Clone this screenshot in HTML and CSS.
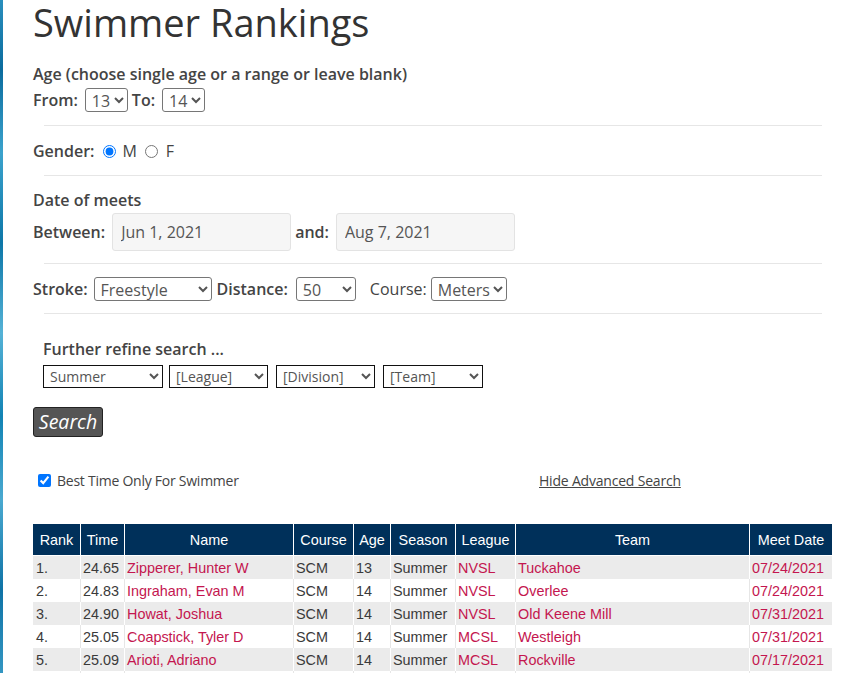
FILE: index.html
```html
<!DOCTYPE html>
<html lang="en">
<head>
<meta charset="utf-8">
<title>Swimmer Rankings</title>
<link rel="stylesheet" href="styles.css">
</head>
<body>
<div class="page">
  <h1 class="title">Swimmer Rankings</h1>

  <section class="block age">
    <div class="label">Age (choose single age or a range or leave blank)</div>
    <div class="row age-row">
      <span class="label">From:</span>
      <select class="sel sel-age"><option>13</option></select>
      <span class="label to">To:</span>
      <select class="sel sel-age sel-to"><option>14</option></select>
    </div>
  </section>

  <hr class="sep">

  <section class="block row gender">
    <span class="label">Gender:</span>
    <input type="radio" name="g" class="radio" checked><span class="opt">M</span>
    <input type="radio" name="g" class="radio radio-f"><span class="opt">F</span>
  </section>

  <hr class="sep">

  <section class="block date-block">
    <div class="label">Date of meets</div>
    <div class="row dates">
      <span class="label">Between:</span>
      <input type="text" class="date" value="Jun 1, 2021" readonly>
      <span class="label and">and:</span>
      <input type="text" class="date" value="Aug 7, 2021" readonly>
    </div>
  </section>

  <hr class="sep">

  <section class="block row stroke">
    <span class="label">Stroke:</span>
    <select class="sel sel-stroke"><option>Freestyle</option></select>
    <span class="label dist">Distance:</span>
    <select class="sel sel-dist"><option>50</option></select>
    <span class="plain course">Course:</span>
    <select class="sel sel-course"><option>Meters</option></select>
  </section>

  <hr class="sep">

  <section class="refine">
    <div class="label">Further refine search ...</div>
    <div class="refine-row">
      <select class="rsel w120"><option>Summer</option></select>
      <select class="rsel w99"><option>[League]</option></select>
      <select class="rsel w99 gap2"><option>[Division]</option></select>
      <select class="rsel w100 gap2"><option>[Team]</option></select>
    </div>
  </section>

  <button class="search">Search</button>

  <div class="options">
    <label class="best"><input type="checkbox" class="check" checked>Best Time Only For Swimmer</label>
    <a class="hide" href="#">Hide Advanced Search</a>
  </div>

  <table class="results">
    <colgroup>
      <col style="width:47px"><col style="width:44px"><col style="width:169px">
      <col style="width:60px"><col style="width:37px"><col style="width:65px">
      <col style="width:60px"><col style="width:234px"><col style="width:83px">
    </colgroup>
    <thead>
      <tr><th>Rank</th><th>Time</th><th>Name</th><th>Course</th><th>Age</th><th>Season</th><th>League</th><th>Team</th><th>Meet Date</th></tr>
    </thead>
    <tbody>
      <tr><td>1.</td><td>24.65</td><td><a href="#">Zipperer, Hunter W</a></td><td>SCM</td><td>13</td><td>Summer</td><td><a href="#">NVSL</a></td><td><a href="#">Tuckahoe</a></td><td><a href="#">07/24/2021</a></td></tr>
      <tr><td>2.</td><td>24.83</td><td><a href="#">Ingraham, Evan M</a></td><td>SCM</td><td>14</td><td>Summer</td><td><a href="#">NVSL</a></td><td><a href="#">Overlee</a></td><td><a href="#">07/24/2021</a></td></tr>
      <tr><td>3.</td><td>24.90</td><td><a href="#">Howat, Joshua</a></td><td>SCM</td><td>14</td><td>Summer</td><td><a href="#">NVSL</a></td><td><a href="#">Old Keene Mill</a></td><td><a href="#">07/31/2021</a></td></tr>
      <tr><td>4.</td><td>25.05</td><td><a href="#">Coapstick, Tyler D</a></td><td>SCM</td><td>14</td><td>Summer</td><td><a href="#">MCSL</a></td><td><a href="#">Westleigh</a></td><td><a href="#">07/31/2021</a></td></tr>
      <tr><td>5.</td><td>25.09</td><td><a href="#">Arioti, Adriano</a></td><td>SCM</td><td>14</td><td>Summer</td><td><a href="#">MCSL</a></td><td><a href="#">Rockville</a></td><td><a href="#">07/17/2021</a></td></tr>
      <tr><td>6.</td><td>25.12</td><td><a href="#">Smith, John</a></td><td>SCM</td><td>14</td><td>Summer</td><td><a href="#">NVSL</a></td><td><a href="#">Overlee</a></td><td><a href="#">07/24/2021</a></td></tr>
    </tbody>
  </table>
</div>
</body>
</html>
```

FILE: styles.css
```css
html, body {
  margin: 0;
  padding: 0;
}
body {
  background: linear-gradient(180deg, #2a8fbd 0%, #0b6c9e 10%, #3ba2cc 22%, #0d77a8 35%, #55b2d6 48%, #1283b4 60%, #4aa9d0 72%, #0f73a6 85%, #3d9fc9 100%);
  min-height: 673px;
  font-family: "Open Sans", "DejaVu Sans", sans-serif;
  color: #444;
  overflow: hidden;
}
.page {
  margin-left: 3px;
  background: #fff;
  min-height: 673px;
  padding: 0 14px 0 30px;
}
.title {
  margin: 0;
  font-size: 38px;
  font-weight: 400;
  line-height: 44px;
  color: #333;
}
.label {
  font-size: 16px;
  font-weight: 600;
  color: #444;
}
.plain {
  font-size: 16px;
  font-weight: 400;
  color: #444;
}
.block > .label,
.refine > .label {
  line-height: 22px;
}
.row {
  display: flex;
  align-items: center;
}
.sep {
  border: 0;
  border-top: 1px solid #e6e6e6;
  margin: 0 10px 0 11px;
  height: 0;
}
.sel {
  font-family: "Open Sans", "DejaVu Sans", sans-serif;
  font-size: 16px;
  color: #555;
  height: 24px;
  border: 1px solid #767676;
  border-radius: 3px;
  background: #fff;
  padding: 0 0 0 2px;
}

/* Age */
.age {
  margin: 19px 0 13px;
}
.age-row {
  margin-top: 3px;
}
.sel-age {
  width: 43px;
  margin-left: 7px;
}
.to {
  margin-left: 4px;
}
.sel-to {
  margin-left: 7px;
}

/* Gender */
.gender {
  margin: 14px 0 13px;
  height: 22px;
}
.radio {
  margin: 0 6px 0 9px;
  width: 13px;
  height: 13px;
}
.radio-f {
  margin-left: 8px;
  margin-right: 8px;
}
.opt {
  font-size: 16px;
  color: #444;
}

/* Dates */
.date-block {
  margin: 13px 0 12px;
}
.dates {
  margin-top: 2px;
}
.date {
  width: 179px;
  height: 38px;
  box-sizing: border-box;
  border: 1px solid #e3e3e3;
  border-radius: 3px;
  background: #f6f6f6;
  font-family: "Open Sans", "DejaVu Sans", sans-serif;
  font-size: 16px;
  color: #555;
  padding: 0 8px;
  margin-left: 7px;
}
.and {
  margin-left: 4px;
}

/* Stroke */
.stroke {
  margin: 13px 0 12px;
}
.sel-stroke {
  width: 118px;
  margin-left: 6px;
}
.dist {
  margin-left: 5px;
}
.sel-dist {
  width: 60px;
  margin-left: 8px;
}
.course {
  margin-left: 14px;
}
.sel-course {
  width: 76px;
  margin-left: 4px;
}

/* Refine */
.refine {
  margin: 24px 0 0 10px;
}
.refine-row {
  display: flex;
  gap: 6px;
  margin-top: 5px;
}
.rsel {
  font-family: "Open Sans", "DejaVu Sans", sans-serif;
  font-size: 14px;
  color: #555;
  height: 23px;
  border: 1px solid #111;
  border-radius: 0;
  background: #fff;
  padding: 0 0 0 2px;
}
.w120 { width: 120px; }
.w99 { width: 99px; }
.w100 { width: 100px; }
.gap2 { margin-left: 2px; }

.search {
  display: block;
  margin-top: 19px;
  width: 70px;
  height: 30px;
  background: #555;
  border: 1px solid #222;
  border-radius: 3px;
  color: #fff;
  font-family: "Open Sans", "DejaVu Sans", sans-serif;
  font-size: 19.5px;
  font-style: italic;
  padding: 0;
  line-height: 26px;
}

.options {
  display: flex;
  align-items: center;
  margin-top: 35px;
  height: 16px;
  padding-left: 5px;
  font-size: 14px;
  color: #444;
}
.best {
  display: flex;
  align-items: center;
  width: 501px;
  font-size: 14px;
  letter-spacing: -0.25px;
}
.check {
  width: 13px;
  height: 13px;
  margin: 0 6px 0 0;
}
.hide {
  color: #444;
  font-size: 14px;
  text-decoration: underline;
  letter-spacing: -0.2px;
}

/* Table */
.results {
  margin-top: 36px;
  width: 799px;
  table-layout: fixed;
  border-collapse: separate;
  border-spacing: 0;
  font-family: "Liberation Sans", Arial, sans-serif;
  font-size: 14.4px;
}
.results th {
  background: #00305a;
  color: #fff;
  font-weight: 400;
  height: 31px;
  padding: 0;
  text-align: center;
  border-left: 1px solid #fff;
  border-bottom: 1px solid #fff;
}
.results th:first-child,
.results td:first-child {
  border-left: 0;
}
.results td {
  height: 23px;
  padding: 0 0 0 2px;
  color: #3a3a3a;
  white-space: nowrap;
  overflow: hidden;
  border-left: 1px solid #fff;
}
.results td:first-child {
  padding-left: 3px;
}
.results tbody tr:nth-child(odd) td {
  background: #ebebeb;
}
.results tbody tr:nth-child(even) td {
  background: #fff;
  border-left-color: #e6e6e6;
}
.results a {
  color: #c4164f;
  text-decoration: none;
}
```
